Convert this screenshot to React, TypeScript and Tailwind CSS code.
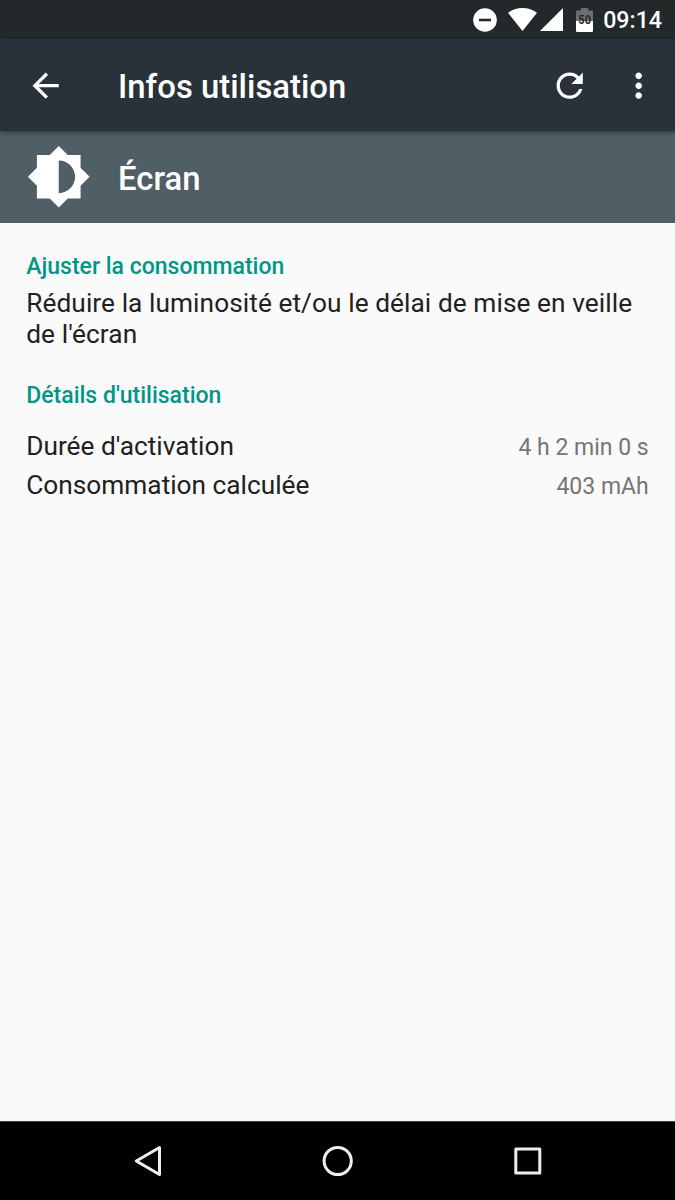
import type { ReactNode } from "react";

function StatusBar() {
  return (
    <div className="flex h-[39px] items-center justify-end bg-[#23282b] pr-[13px] text-white">
      <svg width="24" height="24" viewBox="0 0 24 24" className="mr-[10.5px]">
        <circle cx="12" cy="12" r="11.8" fill="#fff" />
        <rect x="6" y="10.7" width="12" height="2.6" fill="#23282b" />
      </svg>
      <svg width="29" height="23" viewBox="0 0 29 23" className="mr-[3px]">
        <path d="M0 4.8C4 1.7 9 0 14.5 0S25 1.7 29 4.8L14.5 23Z" fill="#fff" />
      </svg>
      <svg width="23" height="23" viewBox="0 0 23 23" className="mr-[13.5px]">
        <path d="M23 0V23H0Z" fill="#fff" />
      </svg>
      <div className="relative mr-[10px] h-[24px] w-[17px]">
        <svg width="17" height="24" viewBox="0 0 17 24" className="block">
          <path d="M1 2.5H4.8V0H12.2V2.5H16Q17 2.5 17 3.5V13H0V3.5Q0 2.5 1 2.5Z" fill="#6b6f71" />
          <path d="M0 13H17V23Q17 24 16 24H1Q0 24 0 23Z" fill="#fff" />
        </svg>
        <span className="absolute inset-x-0 top-[7px] scale-y-[1.15] text-center text-[11px] leading-[12px] font-bold text-[#23282b]">50</span>
      </div>
      <span className="pt-[2px] text-[23.2px] leading-[39px] font-medium">09:14</span>
    </div>
  );
}

function Toolbar() {
  return (
    <header className="relative flex h-[92px] items-center bg-[#283238] pt-[1px] pl-[26px] text-white shadow-[0_2px_5px_rgba(0,0,0,0.35)]">
      <svg width="39.4" height="39.4" viewBox="0 0 24 24" fill="currentColor">
        <path d="M20 11H7.83l5.59-5.59L12 4l-8 8 8 8 1.41-1.41L7.83 13H20v-2z" />
      </svg>
      <h1 className="ml-[52.6px] flex-1 pt-[3px] text-[32.9px] leading-[40px] font-medium">Infos utilisation</h1>
      <svg width="39.4" height="39.4" viewBox="0 0 24 24" fill="currentColor" className="mr-[29.9px]">
        <path d="M17.65 6.35C16.2 4.9 14.21 4 12 4c-4.42 0-7.99 3.58-7.99 8s3.57 8 7.99 8c3.73 0 6.84-2.55 7.73-6h-2.08c-.82 2.33-3.04 4-5.65 4-3.31 0-6-2.69-6-6s2.69-6 6-6c1.66 0 3.14.69 4.22 1.78L13 11h7V4l-2.35 2.35z" />
      </svg>
      <svg width="39.4" height="39.4" viewBox="0 0 24 24" fill="currentColor" className="mr-[16.2px]">
        <path d="M12 8c1.1 0 2-.9 2-2s-.9-2-2-2-2 .9-2 2 .9 2 2 2zm0 2c-1.1 0-2 .9-2 2s.9 2 2 2 2-.9 2-2-.9-2-2-2zm0 6c-1.1 0-2 .9-2 2s.9 2 2 2 2-.9 2-2-.9-2-2-2z" />
      </svg>
    </header>
  );
}

function SectionTitle({ children }: { children: ReactNode }) {
  return <h3 className="text-[23px] leading-[28px] font-medium text-[#009688]">{children}</h3>;
}

function DetailRow({ label, value }: { label: string; value: string }) {
  return (
    <div className="flex h-[39px] items-center justify-between">
      <span className="text-[26.25px] leading-[31px] text-[#212121]">{label}</span>
      <span className="pt-[2px] text-[23px] leading-[27px] text-[#757575]">{value}</span>
    </div>
  );
}

function NavigationBar() {
  return (
    <nav className="flex h-[79px] items-center justify-between border-t border-[#444] bg-black pr-[133.5px] pl-[134px]">
      <svg width="28" height="32" viewBox="0 0 28 32" fill="none" stroke="#eee" strokeWidth="3" strokeLinejoin="round">
        <path d="M2.3 16L25.5 2.5V29.5Z" />
      </svg>
      <svg width="32" height="32" viewBox="0 0 32 32" fill="none" stroke="#eee" strokeWidth="3">
        <circle cx="15.7" cy="16" r="13.6" />
      </svg>
      <svg width="28" height="28" viewBox="0 0 28 28" fill="none" stroke="#eee" strokeWidth="3" strokeLinejoin="round">
        <rect x="1.8" y="2" width="24" height="24" />
      </svg>
    </nav>
  );
}

export default function App() {
  return (
    <div className="flex h-[1200px] w-[675px] flex-col bg-[#fafafa] font-[Roboto,sans-serif]">
      <StatusBar />
      <Toolbar />
      <div className="flex h-[92px] items-center bg-[#505e65] pl-[26.3px] text-white">
        <svg width="65.5" height="65.5" viewBox="0 0 24 24" fill="currentColor">
          <path d="M20 15.31L23.31 12 20 8.69V4h-4.69L12 .69 8.69 4H4v4.69L.69 12 4 15.31V20h4.69L12 23.31 15.31 20H20v-4.69zM12 18V6c3.31 0 6 2.69 6 6s-2.69 6-6 6z" />
        </svg>
        <h2 className="ml-[26.2px] pt-[4px] text-[32.9px] leading-[40px] font-medium">Écran</h2>
      </div>
      <main className="flex-1 px-[26.25px] pt-[30px]">
        <SectionTitle>Ajuster la consommation</SectionTitle>
        <p className="-mr-[10px] mt-[7px] mb-[32px] text-[26.25px] leading-[31px] tracking-[0.07px] text-[#212121]">
          Réduire la luminosité et/ou le délai de mise en veille de l'écran
        </p>
        <SectionTitle>Détails d'utilisation</SectionTitle>
        <div className="mt-[17px]">
          <DetailRow label="Durée d'activation" value="4 h 2 min 0 s" />
          <DetailRow label="Consommation calculée" value="403 mAh" />
        </div>
      </main>
      <NavigationBar />
    </div>
  );
}
